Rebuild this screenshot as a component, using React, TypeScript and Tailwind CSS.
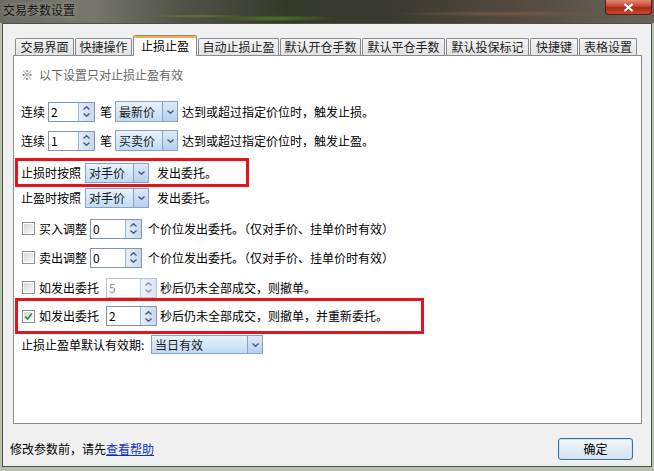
import type { ReactNode } from 'react'

const tabs: [string, string][] = [
  ['交易界面', 'w-[59px]'],
  ['快捷操作', 'w-[57px]'],
  ['止损止盈', 'w-[64px]'],
  ['自动止损止盈', 'w-[81px]'],
  ['默认开仓手数', 'w-[81px]'],
  ['默认平仓手数', 'w-[83px]'],
  ['默认投保标记', 'w-[83px]'],
  ['快捷键', 'w-[48px]'],
  ['表格设置', 'w-[58px]'],
]

function Chevron({ up, color = '#4a5d80' }: { up?: boolean; color?: string }) {
  return (
    <svg width="7" height="4" viewBox="0 0 7 4" className="block">
      <path
        d={up ? 'M0.5 3.5 L3.5 0.7 L6.5 3.5' : 'M0.5 0.5 L3.5 3.3 L6.5 0.5'}
        fill="none"
        stroke={color}
        strokeWidth="1.4"
      />
    </svg>
  )
}

function Combo({ value, w, h = 'h-[20px]' }: { value: string; w: string; h?: string }) {
  return (
    <div className={`flex ${h} ${w} shrink-0 border border-[#8ca1bd] bg-[linear-gradient(#e8f3fc,#c0dbf4)]`}>
      <span className="flex flex-1 items-center pl-[3px] text-[#1a1a1a]">{value}</span>
      <span className="flex w-[15px] items-center justify-center border-l border-[#8ca1bd] bg-[linear-gradient(#dce9f8,#b6d0ee)]">
        <Chevron />
      </span>
    </div>
  )
}

function Spin({ value, w, disabled }: { value: string; w: string; disabled?: boolean }) {
  return (
    <div
      className={`flex h-[20px] ${w} shrink-0 border bg-white ${
        disabled ? 'border-[#b9c3d0]' : 'border-[#8196b2]'
      }`}
    >
      <span className={`flex flex-1 items-center pl-[2px] ${disabled ? 'text-[#8c8c8c]' : 'text-black'}`}>
        {value}
      </span>
      <span
        className={`flex w-[16px] flex-col items-center justify-center gap-[3px] border-l ${
          disabled
            ? 'border-[#c3cdd9] bg-[linear-gradient(90deg,#eef3f9,#dbe6f2)]'
            : 'border-[#9fb3cd] bg-[linear-gradient(90deg,#e5eef9,#c5d9f0)]'
        }`}
      >
        <Chevron up color={disabled ? '#8d9bb0' : '#4a5d80'} />
        <Chevron color={disabled ? '#8d9bb0' : '#4a5d80'} />
      </span>
    </div>
  )
}

function Check({ checked }: { checked?: boolean }) {
  return (
    <span className="flex h-[13px] w-[13px] shrink-0 items-center justify-center border border-[#8e8f8f] bg-white">
      <span className="flex h-[9px] w-[9px] items-center justify-center bg-[linear-gradient(135deg,#d8d8d8,#f8f8f8)]">
        {checked && (
          <svg width="9" height="9" viewBox="0 0 9 9" className="block">
            <path d="M1.2 4.6 L3.6 7 L7.8 1.6" fill="none" stroke="#2f8f2f" strokeWidth="1.7" />
          </svg>
        )}
      </span>
    </span>
  )
}

function Row({ children, cls }: { children: ReactNode; cls: string }) {
  return <div className={`flex items-center whitespace-nowrap ${cls}`}>{children}</div>
}

export default function App() {
  return (
    <div className="flex h-[471px] w-[654px] flex-col overflow-hidden bg-[#b8c1ac] font-['Noto_Sans_CJK_SC',sans-serif] text-[12px] leading-[14px] text-black">
      {/* glass title bar */}
      <div className="flex h-[23px] shrink-0 items-start justify-between bg-[image:radial-gradient(ellipse_at_42%_80%,#50781e_0%,transparent_12%),radial-gradient(ellipse_at_30%_70%,#5c7a2a_0%,transparent_8%),radial-gradient(ellipse_at_78%_60%,#6f5a44_0%,transparent_16%),linear-gradient(90deg,#6a6a62,#77776c_14%,#505246_28%,#34392a_44%,#3a3a30_60%,#52493d_78%,#6a6259_100%)]">
        <span className="ml-[3px] mt-[3px] text-[#141414] [text-shadow:0_0_6px_rgba(210,210,200,0.7)]">
          交易参数设置
        </span>
        <div className="mr-[2px] flex h-[15px] w-[47px] items-center justify-center rounded-b-[4px] border border-t-0 border-[#5c1b12] bg-[linear-gradient(#e08a78,#c8442e_45%,#a92a17_55%,#c64a2e)]">
          <svg width="11" height="9" viewBox="0 0 11 9" className="block">
            <path d="M1.5 1 L9.5 8 M9.5 1 L1.5 8" stroke="#fff" strokeWidth="2.2" />
          </svg>
        </div>
      </div>

      {/* client area */}
      <div className="mx-[2px] flex h-[444px] shrink-0 flex-col border border-[#4e4e4e] bg-[#f0f0f0]">
        <div className="ml-[12px] mt-[11px] flex h-[20px] items-end">
          {tabs.map(([label, w]) =>
            label === '止损止盈' ? (
              <div
                key={label}
                className={`relative z-10 -mb-px mr-px flex h-[21px] ${w} items-center justify-center rounded-t-[2px] border border-b-0 border-[#898c95] bg-white`}
              >
                <span className="absolute left-0 right-0 top-0 h-[2px] rounded-t-[2px] bg-[#f0b040]" />
                {label}
              </div>
            ) : (
              <div
                key={label}
                className={`mr-px flex h-[17px] ${w} items-center justify-center rounded-t-[2px] border border-b-0 border-[#898c95] bg-[linear-gradient(#f4f4f4,#e2e2e2)] text-[#222]`}
              >
                {label}
              </div>
            ),
          )}
        </div>

        <div className="ml-[10px] flex h-[369px] w-[629px] flex-col border border-[#898c95] bg-white">
          <Row cls="mt-[12px] h-[14px] pl-[7px] text-[#666]">
            <span className="w-[18px]">※</span>
            <span>以下设置只对止损止盈有效</span>
          </Row>

          <Row cls="mt-[19px] h-[21px] pl-[7px]">
            <span className="w-[27px]">连续</span>
            <Spin value="2" w="w-[47px]" />
            <span className="ml-[5px] w-[15px]">笔</span>
            <Combo value="最新价" w="w-[63px]" h="h-[21px]" />
            <span className="ml-[4px]">达到或超过指定价位时，触发止损。</span>
          </Row>

          <Row cls="mt-[8px] h-[21px] pl-[7px]">
            <span className="w-[27px]">连续</span>
            <Spin value="1" w="w-[47px]" />
            <span className="ml-[5px] w-[15px]">笔</span>
            <Combo value="买卖价" w="w-[63px]" h="h-[21px]" />
            <span className="ml-[4px]">达到或超过指定价位时，触发止盈。</span>
          </Row>

          <Row cls="mt-[7px] ml-px h-[29px] w-[234px] border-[3px] border-[#e3141c] pl-[3px]">
            <span className="w-[64px]">止损时按照</span>
            <Combo value="对手价" w="w-[64px]" />
            <span className="ml-[8px]">发出委托。</span>
          </Row>

          <Row cls="mt-px h-[20px] pl-[7px]">
            <span className="w-[64px]">止盈时按照</span>
            <Combo value="对手价" w="w-[64px]" />
            <span className="ml-[8px]">发出委托。</span>
          </Row>

          <Row cls="mt-[10px] h-[21px] pl-[8px]">
            <Check />
            <span className="ml-[4px] w-[51px]">买入调整</span>
            <Spin value="0" w="w-[52px]" />
            <span className="ml-[6px]">个价位发出委托。（仅对手价、挂单价时有效）</span>
          </Row>

          <Row cls="mt-[8px] h-[21px] pl-[8px]">
            <Check />
            <span className="ml-[4px] w-[51px]">卖出调整</span>
            <Spin value="0" w="w-[52px]" />
            <span className="ml-[6px]">个价位发出委托。（仅对手价、挂单价时有效）</span>
          </Row>

          <Row cls="mt-[9px] h-[21px] pl-[8px]">
            <Check />
            <span className="ml-[4px] w-[67px]">如发出委托</span>
            <Spin value="5" w="w-[51px]" disabled />
            <span className="ml-[3px]">秒后仍未全部成交，则撤单。</span>
          </Row>

          <Row cls="ml-px h-[36px] w-[409px] border-[3px] border-[#e3141c] pl-[4px]">
            <Check checked />
            <span className="ml-[4px] w-[67px]">如发出委托</span>
            <Spin value="2" w="w-[51px]" />
            <span className="ml-[3px]">秒后仍未全部成交，则撤单，并重新委托。</span>
          </Row>

          <Row cls="mt-px h-[19px] pl-[7px]">
            <span className="w-[130px]">止损止盈单默认有效期:</span>
            <Combo value="当日有效" w="w-[112px]" h="h-[19px]" />
          </Row>
        </div>

        <div className="mt-[14px] flex h-[22px] items-center justify-between pl-[7px] pr-[18px]">
          <span>
            修改参数前，请先<span className="text-[#0b2fd0] underline">查看帮助</span>
          </span>
          <button
            type="button"
            className="flex h-[22px] w-[75px] items-center justify-center rounded-[3px] border border-[#3c6f9e] bg-[linear-gradient(#f3f7fb,#e4ecf4_50%,#d6e2ee)] shadow-[inset_0_0_0_1px_#c6e4f7]"
          >
            确定
          </button>
        </div>
      </div>
    </div>
  )
}
